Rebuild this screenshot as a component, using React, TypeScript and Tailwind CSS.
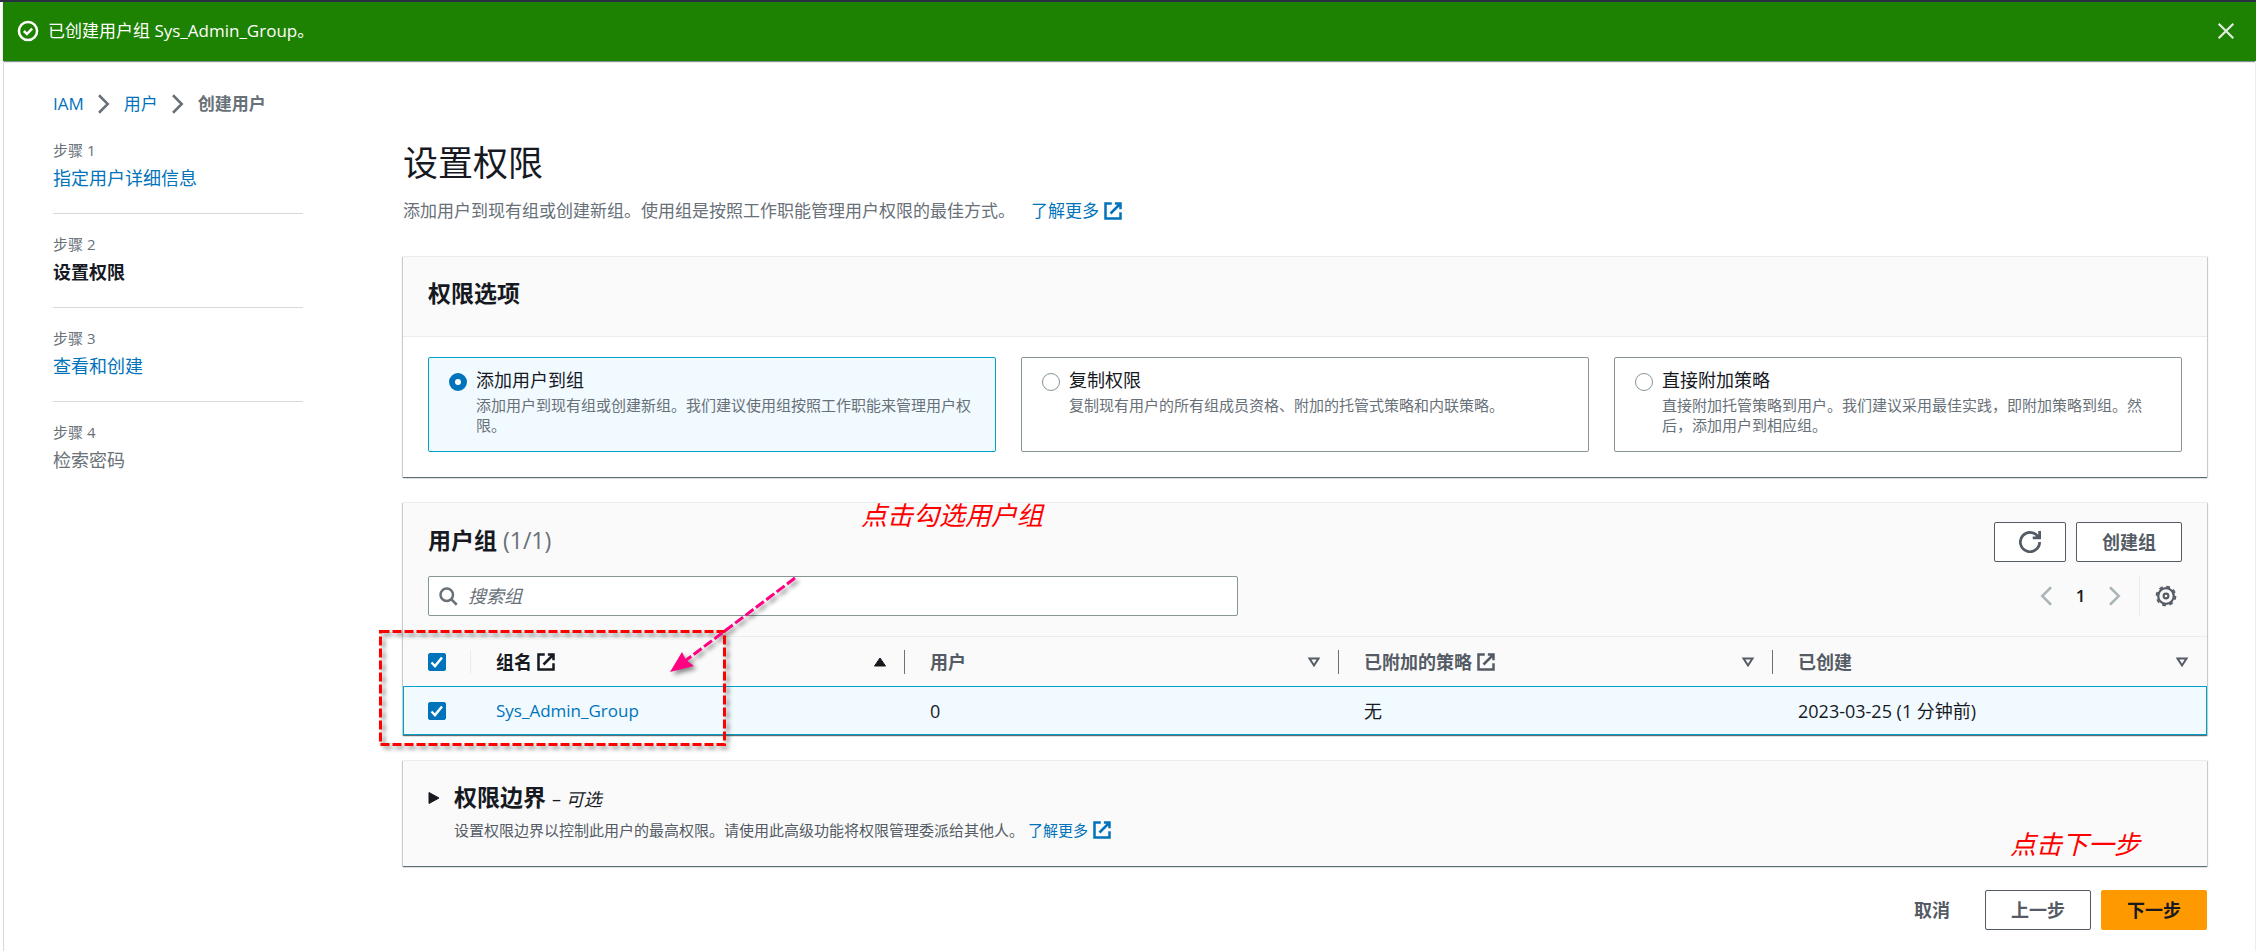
import { useState } from "react";
import type { ReactNode } from "react";

const steps = [
  { label: "步骤 1", title: "指定用户详细信息", state: "link" },
  { label: "步骤 2", title: "设置权限", state: "active" },
  { label: "步骤 3", title: "查看和创建", state: "link" },
  { label: "步骤 4", title: "检索密码", state: "disabled" },
];

const options = [
  {
    id: "add-to-group",
    title: "添加用户到组",
    description:
      "添加用户到现有组或创建新组。我们建议使用组按照工作职能来管理用户权限。",
  },
  {
    id: "copy",
    title: "复制权限",
    description: "复制现有用户的所有组成员资格、附加的托管式策略和内联策略。",
  },
  {
    id: "attach",
    title: "直接附加策略",
    description:
      "直接附加托管策略到用户。我们建议采用最佳实践，即附加策略到组。然后，添加用户到相应组。",
  },
];

const columns = [
  { title: "组名", external: true, sorted: true },
  { title: "用户", external: false, sorted: false },
  { title: "已附加的策略", external: true, sorted: false },
  { title: "已创建", external: false, sorted: false },
];

function Icon({ className, children }: { className: string; children: ReactNode }) {
  return (
    <svg
      viewBox="0 0 16 16"
      fill="none"
      stroke="currentColor"
      strokeWidth="2"
      className={className}
      aria-hidden="true"
    >
      {children}
    </svg>
  );
}

function ExternalIcon() {
  return (
    <Icon className="h-5 w-5 shrink-0">
      <path d="M9.5 2H14v4.5M6 10l8-8M14 9v5H2V2h5" />
    </Icon>
  );
}

function ChevronRight({ className }: { className: string }) {
  return (
    <Icon className={className}>
      <path d="m4 1 7 7-7 7" />
    </Icon>
  );
}

function Panel({ className = "", children }: { className?: string; children: ReactNode }) {
  return (
    <section
      className={`relative border-t border-[#eaeded] bg-[#fafafa] shadow-[0_1px_1px_0_rgba(0,28,36,0.5),1px_1px_1px_0_rgba(0,28,36,0.15),-1px_1px_1px_0_rgba(0,28,36,0.15)] ${className}`}
    >
      {children}
    </section>
  );
}

function Checkbox({ label }: { label: string }) {
  return (
    <span className="grid h-[18px] w-[18px]">
      <input
        type="checkbox"
        defaultChecked
        aria-label={label}
        className="peer col-start-1 row-start-1 h-[18px] w-[18px] appearance-none rounded-xs border border-[#879596] bg-white checked:border-[#0073bb] checked:bg-[#0073bb]"
      />
      <svg
        viewBox="0 0 18 18"
        fill="none"
        stroke="white"
        strokeWidth="2.4"
        className="pointer-events-none invisible col-start-1 row-start-1 peer-checked:visible"
        aria-hidden="true"
      >
        <path d="m3.5 9.5 3.5 3.6L14 4.5" />
      </svg>
    </span>
  );
}

export default function App() {
  const [selected, setSelected] = useState("add-to-group");

  return (
    <div className="flex min-h-screen flex-col bg-white pl-[3px] font-['Open_Sans','Noto_Sans_CJK_SC',sans-serif] text-[18px] leading-7 text-[#16191f]">
      <div className="-ml-[3px] h-0.5 bg-[#2a3040]" />
      <div className="flex h-[59px] items-center bg-[#1d8102] pr-[21px] pb-0.5 pl-[14px] text-white shadow-[0_1px_1px_0_rgba(0,28,36,0.5)]">
        <Icon className="h-[22px] w-[22px]">
          <circle cx="8" cy="8" r="6.6" strokeWidth="1.8" />
          <path d="m5 8 2.2 2.2L11 6.2" strokeWidth="1.8" />
        </Icon>
        <p className="ml-[9px] flex-1 text-[17px]">已创建用户组 Sys_Admin_Group。</p>
        <button aria-label="关闭" className="text-[#e3ecdf]">
          <Icon className="h-[18px] w-[18px]">
            <path d="m1.5 1.5 13 13m0-13-13 13" />
          </Icon>
        </button>
      </div>

      <div className="flex-1 border-r border-l border-r-[#eaeded] border-l-[#d5dbdb] pr-12 pl-[49px]">
        <nav
          aria-label="路径"
          className="mt-[29px] flex items-center text-[17px] text-[#687078]"
        >
          <a href="#" className="text-[#0073bb]">IAM</a>
          <ChevronRight className="mx-[10px] h-5 w-5" />
          <a href="#" className="text-[#0073bb]">用户</a>
          <ChevronRight className="mx-[10px] h-5 w-5" />
          <span className="font-bold">创建用户</span>
        </nav>

        <div className="flex gap-[100px]">
          <ol className="mt-[18px] w-[250px] shrink-0">
            {steps.map((step) => (
              <li
                key={step.label}
                className="mb-4 border-b border-[#d5dbdb] pb-[21px] last:border-0"
              >
                <div className="text-[15px] text-[#687078]">{step.label}</div>
                {step.state === "link" ? (
                  <a href="#" className="text-[#0073bb]">{step.title}</a>
                ) : (
                  <span
                    className={
                      step.state === "active" ? "font-bold" : "text-[#687078]"
                    }
                  >
                    {step.title}
                  </span>
                )}
              </li>
            ))}
          </ol>

          <main className="min-w-0 flex-1">
            <h1 className="mt-[22px] text-[35px] leading-[46px]">设置权限</h1>
            <p className="mt-[11px] flex items-center gap-4 text-[17px] text-[#687078]">
              添加用户到现有组或创建新组。使用组是按照工作职能管理用户权限的最佳方式。
              <a href="#" className="flex items-center gap-1 text-[#0073bb]">
                了解更多
                <ExternalIcon />
              </a>
            </p>

            <Panel className="mt-[31px]">
              <h2 className="border-b border-[#eaeded] px-[25px] pt-[22px] pb-7 text-[23px] leading-[29px] font-bold">
                权限选项
              </h2>
              <div className="grid grid-cols-3 gap-[25px] bg-white px-[25px] pt-5 pb-[25px]">
                {options.map((option) => (
                  <label
                    key={option.id}
                    htmlFor={option.id}
                    className="flex gap-[9px] rounded-xs border border-[#879596] px-5 pt-[10px] pb-4 has-checked:border-[#00a1c9] has-checked:bg-[#f1faff]"
                  >
                    <input
                      id={option.id}
                      type="radio"
                      name="permission"
                      checked={selected === option.id}
                      onChange={() => setSelected(option.id)}
                      className="mt-[5px] h-[18px] w-[18px] shrink-0 appearance-none rounded-full border border-[#879596] bg-white checked:border-[6px] checked:border-[#0073bb]"
                    />
                    <span>
                      <span className="block leading-6">{option.title}</span>
                      <span className="mt-[3px] block text-[15px] leading-5 text-[#687078]">
                        {option.description}
                      </span>
                    </span>
                  </label>
                ))}
              </div>
            </Panel>

            <Panel className="mt-[25px]">
              <div className="border-b border-[#eaeded] px-[25px] pt-[19px] pb-5">
                <div className="flex items-center gap-[10px]">
                  <h2 className="flex-1 pb-1 text-[23px] font-bold">
                    用户组 <span className="font-normal text-[#687078]">(1/1)</span>
                  </h2>
                  <button
                    aria-label="刷新"
                    className="flex h-10 w-[72px] items-center justify-center rounded-xs border border-[#545b64] bg-white text-[#545b64]"
                  >
                    <Icon className="h-[22px] w-[22px]">
                      <path d="M10 5h5V0M15 8a7 7 0 1 1-.7-3" />
                    </Icon>
                  </button>
                  <button className="h-10 rounded-xs border border-[#545b64] bg-white px-[25px] font-bold text-[#545b64]">
                    创建组
                  </button>
                </div>
                <div className="mt-[14px] flex items-center">
                  <div className="flex h-10 max-w-[810px] flex-1 items-center rounded-xs border border-[#879596] bg-white pl-[9px]">
                    <Icon className="h-5 w-5 shrink-0 text-[#687078]">
                      <circle cx="7" cy="7" r="5" />
                      <path d="m10.5 10.5 4.5 4.5" />
                    </Icon>
                    <input
                      type="search"
                      aria-label="搜索组"
                      placeholder="搜索组"
                      className="h-full w-full bg-transparent pl-[10px] outline-none placeholder:text-[#687078] placeholder:italic"
                    />
                  </div>
                  <div className="ml-auto flex items-center">
                    <button aria-label="上一页" className="text-[#aab7b8]">
                      <ChevronRight className="h-5 w-5 rotate-180" />
                    </button>
                    <button className="w-[49px] text-[17px] font-semibold">1</button>
                    <button aria-label="下一页" className="text-[#aab7b8]">
                      <ChevronRight className="h-5 w-5" />
                    </button>
                    <span className="ml-[14px] h-10 w-px bg-[#eaeded]" />
                    <button aria-label="首选项" className="mr-1 ml-[14px] text-[#545b64]">
                      <Icon className="h-6 w-6">
                        <circle cx="8" cy="8" r="5.2" strokeWidth="1.5" />
                        <circle cx="8" cy="8" r="6.3" strokeWidth="1.2" strokeDasharray="2.5 2.448" />
                        <circle cx="8" cy="8" r="1.6" strokeWidth="1.4" />
                      </Icon>
                    </button>
                  </div>
                </div>
              </div>

              <table className="w-full table-fixed text-left">
                <thead>
                  <tr className="h-[49px] text-[#545b64]">
                    <th className="w-[68px] p-0">
                      <div className="flex h-6 items-center border-r border-[#eaeded] pl-[25px]">
                        <Checkbox label="全选" />
                      </div>
                    </th>
                    {columns.map((column) => (
                      <th
                        key={column.title}
                        aria-sort={column.sorted ? "ascending" : "none"}
                        className="group p-0 font-bold"
                      >
                        <div
                          className={`flex h-6 items-center gap-1 border-r border-[#687078] pr-4 pl-[25px] group-last:border-transparent ${column.sorted ? "text-[#16191f]" : ""}`}
                        >
                          {column.title}
                          {column.external && <ExternalIcon />}
                          <Icon className="ml-auto h-4 w-4">
                            {column.sorted ? (
                              <path d="M8 4 13.5 12h-11z" fill="currentColor" strokeWidth="1" />
                            ) : (
                              <path d="M3.5 4.5h9L8 11.5z" />
                            )}
                          </Icon>
                        </div>
                      </th>
                    ))}
                  </tr>
                </thead>
                <tbody>
                  <tr className="h-[49px] bg-[#f1faff] outline outline-[#00a1c9] -outline-offset-1">
                    <td className="pl-[25px]">
                      <Checkbox label="Sys_Admin_Group" />
                    </td>
                    <td className="pl-[25px] text-[17px]">
                      <a href="#" className="text-[#0073bb]">Sys_Admin_Group</a>
                    </td>
                    <td className="pl-[25px]">0</td>
                    <td className="pl-[25px]">无</td>
                    <td className="pl-[25px]">2023-03-25 (1 分钟前)</td>
                  </tr>
                </tbody>
              </table>

              {/* callouts drawn over the table */}
              <p className="pointer-events-none absolute -top-0.5 left-[458px] text-[26px] text-[#ff0000] italic">
                点击勾选用户组
              </p>
              <svg
                viewBox="0 0 430 190"
                fill="none"
                className="pointer-events-none absolute top-[70px] -left-[31px] h-[190px] w-[430px] drop-shadow-[3px_3px_2px_rgba(0,0,0,0.45)]"
                aria-hidden="true"
              >
                <rect
                  x="8.5"
                  y="58.5"
                  width="344"
                  height="113"
                  stroke="#ff0000"
                  strokeWidth="3"
                  strokeDasharray="9 3"
                />
                <path d="M423 5 313 88" stroke="#ff0080" strokeWidth="3" strokeDasharray="10 3" />
                <path d="m298 99 12-20 4 8 8 6z" fill="#ff0080" />
              </svg>
            </Panel>

            <Panel className="mt-[25px] pt-[21px] pb-[22px] pl-[25px]">
              <div className="flex gap-[14px]">
                <button aria-label="展开" className="h-8">
                  <svg viewBox="0 0 12 14" className="h-[14px] w-3" fill="currentColor" aria-hidden="true">
                    <path d="M1 1.5v11L11 7z" stroke="currentColor" strokeLinejoin="round" />
                  </svg>
                </button>
                <div>
                  <h2 className="text-[23px] leading-[30px] font-bold">
                    权限边界 <span className="text-[18px] font-normal">– <em>可选</em></span>
                  </h2>
                  <p className="mt-0.5 flex items-center gap-1 text-[15px] text-[#545b64]">
                    设置权限边界以控制此用户的最高权限。请使用此高级功能将权限管理委派给其他人。
                    <a href="#" className="flex items-center gap-1 text-[#0073bb]">
                      了解更多
                      <ExternalIcon />
                    </a>
                  </p>
                </div>
              </div>
              <p className="pointer-events-none absolute right-[67px] bottom-2 text-[26px] text-[#ff0000] italic">
                点击下一步
              </p>
            </Panel>

            <div className="mt-6 mb-5 flex justify-end gap-[10px] font-bold text-[#545b64]">
              <button className="h-10 px-[25px]">取消</button>
              <button className="h-10 rounded-xs border border-[#545b64] bg-white px-[25px]">
                上一步
              </button>
              <button className="h-10 rounded-xs border border-[#ff9900] bg-[#ff9900] px-[25px] text-[#16191f]">
                下一步
              </button>
            </div>
          </main>
        </div>
      </div>
    </div>
  );
}
